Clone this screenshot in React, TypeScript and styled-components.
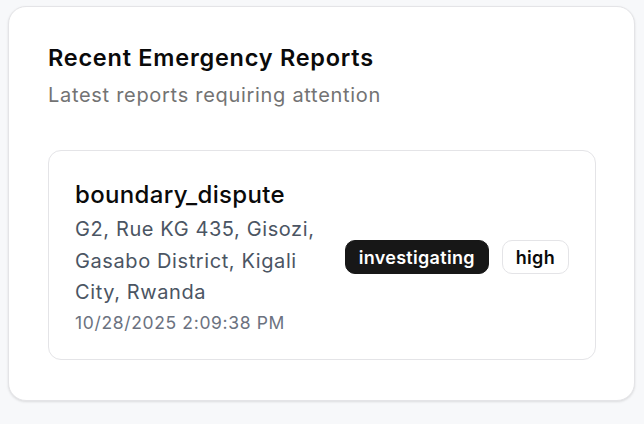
import React from 'react';
import styled, { createGlobalStyle } from 'styled-components';

const GlobalStyle = createGlobalStyle`
  html, body {
    margin: 0;
    padding: 0;
    background: #f7f8fa;
    font-family: Inter, 'Noto Sans', 'Liberation Sans', sans-serif;
    -webkit-font-smoothing: antialiased;
  }
`;

const Page = styled.div`
  padding: 6px 9px 8px 8px;
`;

const Card = styled.section`
  background: #ffffff;
  border: 1px solid #e4e4e7;
  border-radius: 18px;
  box-shadow: 0 1px 3px rgba(0, 0, 0, 0.08), 0 1px 2px rgba(0, 0, 0, 0.04);
  padding: 36px 38px 40px 39px;
`;

const Title = styled.h2`
  margin: 0;
  font-size: 23.5px;
  line-height: 30px;
  font-weight: 600;
  color: #0a0a0a;
  letter-spacing: 0.75px;
`;

const Subtitle = styled.p`
  margin: 8px 0 0;
  font-size: 20px;
  line-height: 28px;
  color: #737373;
  letter-spacing: 0.7px;
`;

const List = styled.div`
  margin-top: 41px;
  display: flex;
  flex-direction: column;
  gap: 12px;
`;

const ReportRow = styled.div`
  display: flex;
  align-items: center;
  justify-content: space-between;
  gap: 16px;
  border: 1px solid #e4e4e7;
  border-radius: 13px;
  padding: 29px 26px 24px 26px;
`;

const Info = styled.div`
  display: flex;
  flex-direction: column;
  max-width: 258px;
`;

const ReportType = styled.div`
  font-size: 24px;
  line-height: 30px;
  font-weight: 500;
  color: #0a0a0a;
  letter-spacing: 0.35px;
  margin-bottom: 4px;
`;

const Address = styled.div`
  font-size: 20px;
  line-height: 31.5px;
  color: #4b5563;
  letter-spacing: 0.6px;
`;

const Time = styled.div`
  font-size: 17.5px;
  line-height: 24px;
  color: #6b7280;
  letter-spacing: 0.65px;
  margin-top: 2px;
`;

const Badges = styled.div`
  display: flex;
  align-items: center;
  gap: 13px;
`;

const Badge = styled.span<{ $variant: 'solid' | 'outline' }>`
  display: inline-flex;
  align-items: center;
  height: 34px;
  box-sizing: border-box;
  padding: 0 13px;
  border-radius: 10px;
  font-size: 18px;
  font-weight: 600;
  letter-spacing: 0.3px;
  background: ${p => (p.$variant === 'solid' ? '#171717' : '#ffffff')};
  color: ${p => (p.$variant === 'solid' ? '#ffffff' : '#0a0a0a')};
  border: 1px solid ${p => (p.$variant === 'solid' ? '#171717' : '#e4e4e7')};
`;

const reports = [
  {
    id: 1,
    type: 'boundary_dispute',
    address: 'G2, Rue KG 435, Gisozi, Gasabo District, Kigali City, Rwanda',
    time: '10/28/2025 2:09:38 PM',
    status: 'investigating',
    priority: 'high'
  }
];

export default function App() {
  return (
    <>
      <GlobalStyle />
      <Page>
        <Card>
          <Title>Recent Emergency Reports</Title>
          <Subtitle>Latest reports requiring attention</Subtitle>
          <List>
            {reports.map(r => (
              <ReportRow key={r.id}>
                <Info>
                  <ReportType>{r.type}</ReportType>
                  <Address>{r.address}</Address>
                  <Time>{r.time}</Time>
                </Info>
                <Badges>
                  <Badge $variant='solid'>{r.status}</Badge>
                  <Badge $variant='outline'>{r.priority}</Badge>
                </Badges>
              </ReportRow>
            ))}
          </List>
        </Card>
      </Page>
    </>
  );
}
